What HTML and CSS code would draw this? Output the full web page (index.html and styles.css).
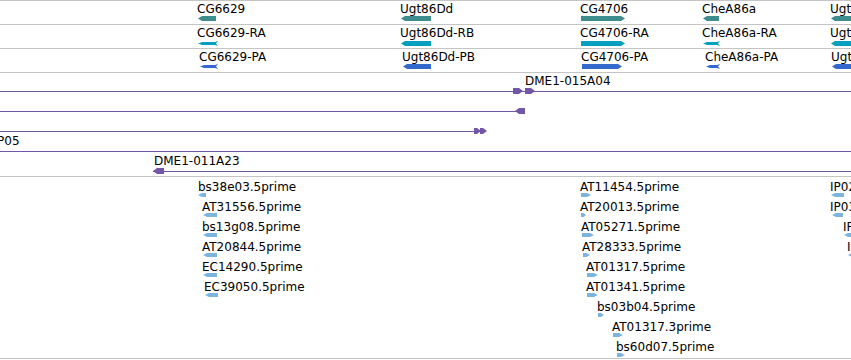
FILE: index.html
```html
<!DOCTYPE html>
<html>
<head>
  <title>Genome Browser - Detail View</title>
  <link rel="stylesheet" href="styles.css">
</head>
<body>
  <div class="panel">
    <div class="track gene-row genes" id="genes"></div>
    <div class="track gene-row transcripts" id="transcripts"></div>
    <div class="track gene-row proteins" id="proteins"></div>
    <div class="track clones" id="clones"></div>
    <div class="track ests" id="ests"></div>
  </div>

  <script>
    var SVGNS = "http://www.w3.org/2000/svg";

    // shapes are drawn pointing right, then mirrored for the minus strand
    function shapePoints(shape, w, h) {
      var t = Math.min(4, w / 2);
      if (shape === "tail") {
        return [[0, 0], [3, 1], [w - t, 1], [w, h / 2], [w - t, h - 1], [3, h - 1], [0, h], [2, h / 2]];
      }
      if (shape === "end") {
        return [[0, 0], [w - 4, 0], [w, h / 2], [w - 4, h], [0, h]];
      }
      return [[0, 0], [w - t, 0], [w, h / 2], [w - t, h], [0, h]];
    }

    function makeGlyph(f, h, cls) {
      var svg = document.createElementNS(SVGNS, "svg");
      svg.setAttribute("class", "glyph " + cls);
      svg.setAttribute("width", f.w);
      svg.setAttribute("height", h);
      var pts = shapePoints(f.shape || "arrow", f.w, h).map(function (p) {
        var x = f.dir === "-" ? f.w - p[0] : p[0];
        return x + "," + p[1];
      });
      var poly = document.createElementNS(SVGNS, "polygon");
      poly.setAttribute("points", pts.join(" "));
      svg.appendChild(poly);
      svg.style.left = f.x + "px";
      return svg;
    }

    function makeLabel(text, x) {
      var el = document.createElement("div");
      el.className = "label";
      el.textContent = text;
      el.style.left = x + "px";
      return el;
    }

    function addFeature(parent, f, h) {
      if (f.label) parent.appendChild(makeLabel(f.label, f.lx !== undefined ? f.lx : f.x - 1));
      parent.appendChild(makeGlyph(f, h, ""));
    }

    var genes = [
      { label: "CG6629", x: 198, w: 18, dir: "-" },
      { label: "Ugt86Dd", x: 401, w: 30, dir: "-" },
      { label: "CG4706", x: 581, w: 44, dir: "+" },
      { label: "CheA86a", x: 703, w: 16, dir: "-" },
      { label: "Ugt86De", x: 831, w: 40, dir: "-" }
    ];
    var transcripts = [
      { label: "CG6629-RA", x: 198, w: 20, dir: "-", shape: "tail" },
      { label: "Ugt86Dd-RB", x: 401, w: 30, dir: "-" },
      { label: "CG4706-RA", x: 581, w: 44, dir: "+" },
      { label: "CheA86a-RA", x: 703, w: 17, dir: "-", shape: "tail" },
      { label: "Ugt86De-RA", x: 831, w: 40, dir: "-" }
    ];
    var proteins = [
      { label: "CG6629-PA", x: 200, w: 18, dir: "-", shape: "tail" },
      { label: "Ugt86Dd-PB", x: 403, w: 28, dir: "-" },
      { label: "CG4706-PA", x: 582, w: 40, dir: "+" },
      { label: "CheA86a-PA", x: 706, w: 14, dir: "-", shape: "tail" },
      { label: "Ugt86De-PA", x: 832, w: 40, dir: "-" }
    ];

    genes.forEach(function (f) { addFeature(document.getElementById("genes"), f, 5); });
    transcripts.forEach(function (f) { addFeature(document.getElementById("transcripts"), f, 5); });
    proteins.forEach(function (f) { addFeature(document.getElementById("proteins"), f, 5); });

    // BAC clones: span line plus end-sequence arrows
    var clones = [
      { label: "DME1-015A04", lx: 525, from: 0, to: 851, ends: [{ x: 513, w: 10, dir: "+" }, { x: 525, w: 10, dir: "+" }] },
      { from: 0, to: 525, ends: [{ x: 515, w: 10, dir: "-" }] },
      { from: 0, to: 486, ends: [{ x: 474, w: 7, dir: "+" }, { x: 480, w: 7, dir: "+" }] },
      { label: "DME1-012P05", lx: -65, from: 0, to: 851, ends: [] },
      { label: "DME1-011A23", lx: 154, from: 153, to: 851, ends: [{ x: 153, w: 11, dir: "-" }] }
    ];

    var cloneTrack = document.getElementById("clones");
    clones.forEach(function (c) {
      var row = document.createElement("div");
      row.className = "clone-row";
      if (c.label) row.appendChild(makeLabel(c.label, c.lx));
      var line = document.createElement("div");
      line.className = "clone-line";
      line.style.left = c.from + "px";
      line.style.width = (c.to - c.from) + "px";
      row.appendChild(line);
      c.ends.forEach(function (e) {
        e.shape = "end";
        row.appendChild(makeGlyph(e, 6, ""));
      });
      cloneTrack.appendChild(row);
    });

    // EST 5'/3' reads, grouped in rows
    var ests = [
      [{ label: "bs38e03.5prime", lx: 198, x: 198, w: 8, dir: "-" }, { label: "AT11454.5prime", x: 581, w: 10, dir: "+" }, { label: "IP02714.5prime", x: 831, w: 13, dir: "-" }],
      [{ label: "AT31556.5prime", x: 203, w: 14, dir: "-" }, { label: "AT20013.5prime", x: 581, w: 5, dir: "+" }, { label: "IP03218.5prime", lx: 830, x: 832, w: 11, dir: "-" }],
      [{ label: "bs13g08.5prime", x: 203, w: 14, dir: "-" }, { label: "AT05271.5prime", x: 582, w: 12, dir: "+" }, { label: "IP08833.5prime", x: 844, w: 8, dir: "-" }],
      [{ label: "AT20844.5prime", x: 203, w: 14, dir: "-" }, { label: "AT28333.5prime", x: 583, w: 7, dir: "+" }, { label: "IP10412.5prime", x: 848, w: 8, dir: "-" }],
      [{ label: "EC14290.5prime", x: 203, w: 14, dir: "-" }, { label: "AT01317.5prime", x: 587, w: 11, dir: "+" }],
      [{ label: "EC39050.5prime", x: 205, w: 13, dir: "-" }, { label: "AT01341.5prime", x: 587, w: 11, dir: "+" }],
      [{ label: "bs03b04.5prime", x: 598, w: 6, dir: "+" }],
      [{ label: "AT01317.3prime", x: 613, w: 10, dir: "+" }],
      [{ label: "bs60d07.5prime", x: 617, w: 8, dir: "+" }]
    ];

    var estTrack = document.getElementById("ests");
    ests.forEach(function (items) {
      var row = document.createElement("div");
      row.className = "est-row";
      items.forEach(function (f) { addFeature(row, f, 4); });
      estTrack.appendChild(row);
    });
  </script>
</body>
</html>
```

FILE: styles.css
```css
body {
  margin: 0;
  background: #fff;
  font-family: "DejaVu Sans", sans-serif;
  font-size: 12px;
  color: #000;
  overflow: hidden;
}

.panel {
  width: 851px;
  overflow: hidden;
}

.track {
  position: relative;
  border-top: 1px solid #c4c4c4;
}

.gene-row {
  height: 24px;
  box-sizing: border-box;
}

.label {
  position: absolute;
  top: 2px;
  line-height: 12px;
  white-space: nowrap;
}

.glyph {
  position: absolute;
  display: block;
  top: 15px;
}

.genes polygon {
  fill: #3d8c8e;
}

.transcripts .glyph {
  top: 16px;
}

.transcripts polygon {
  fill: #05a0c0;
}

.proteins polygon {
  fill: #3368cc;
}

.clones {
  padding-bottom: 3px;
}

.clone-row {
  position: relative;
  height: 20px;
}

.clone-line {
  position: absolute;
  top: 18px;
  height: 1px;
  background: #7256a8;
}

.clone-row .glyph {
  top: 15px;
}

.clone-row polygon {
  fill: #7256a8;
}

.ests {
  padding-bottom: 1px;
  border-bottom: 1px solid #c4c4c4;
}

.est-row {
  position: relative;
  height: 20px;
}

.est-row .label {
  top: 4px;
}

.est-row .glyph {
  top: 16px;
}

.est-row polygon {
  fill: #7bb5de;
}
```
